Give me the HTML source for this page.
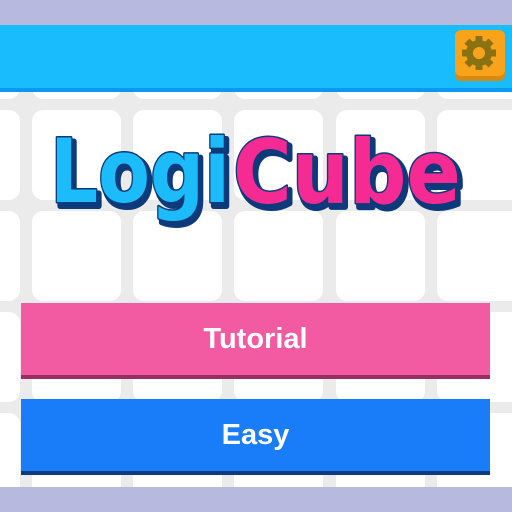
<!DOCTYPE html>
<html><head><meta charset="utf-8"><style>
html,body{margin:0;padding:0}
body{width:512px;height:512px;position:relative;overflow:hidden;background:#ebebeb;font-family:"DejaVu Sans","Liberation Sans",sans-serif}
.tile{position:absolute;width:89px;height:90px;background:#fff;border-radius:11px}
.top{position:absolute;left:0;top:0;width:512px;height:25px;background:#b7b9df}
.bar{position:absolute;left:0;top:25px;width:512px;height:63px;background:#19bcfd;border-bottom:4px solid #0a98f5}
.gear{position:absolute;left:455px;top:30px;width:50px;height:46px;background:#f9a31b;border-radius:6px;box-shadow:0 5px 0 #d98a12}
.btn{position:absolute;left:21px;width:469px;height:72px;color:#fff;font-family:"Liberation Sans",sans-serif;font-weight:bold;font-size:29px;text-align:center;line-height:72px}
.bot{position:absolute;left:0;top:487px;width:512px;height:25px;background:#b7b9df}
</style></head><body>
<div id="g"></div>
<script>
var g=document.getElementById('g'),h='';
var xs=[-69,32,133,234,336,437],ys=[9,110,211,312,413];
for(var i=0;i<xs.length;i++)for(var j=0;j<ys.length;j++)h+='<div class="tile" style="left:'+xs[i]+'px;top:'+ys[j]+'px"></div>';
g.innerHTML=h;
</script>
<div class="top"></div>
<div class="bar"></div>
<div class="gear"><svg width="50" height="46" viewBox="0 0 50 46">
<g fill="#8a7213" transform="translate(24,23)">
<circle r="13"/>
<g><rect x="-3.5" y="-17" width="7" height="6"/><rect x="-3.5" y="11" width="7" height="6"/><rect x="-17" y="-3.5" width="6" height="7"/><rect x="11" y="-3.5" width="6" height="7"/></g>
<g transform="rotate(45)"><rect x="-3.5" y="-17" width="7" height="6"/><rect x="-3.5" y="11" width="7" height="6"/><rect x="-17" y="-3.5" width="6" height="7"/><rect x="11" y="-3.5" width="6" height="7"/></g>
</g><circle cx="24" cy="23" r="6" fill="#f9a31b"/></svg></div>
<svg style="position:absolute;left:0;top:0" width="512" height="512">
<g font-family="DejaVu Sans, sans-serif" font-weight="bold" font-size="88" stroke="#0d3a7a" stroke-width="6" paint-order="stroke" stroke-linejoin="round">
<text x="53" y="206" fill="#0d3a7a" textLength="180" lengthAdjust="spacingAndGlyphs">Logi</text>
<text x="50" y="202" fill="#1bbcf9" stroke-width="3" textLength="180" lengthAdjust="spacingAndGlyphs">Logi</text>
<text x="236" y="207" fill="#0d3a7a" textLength="228" lengthAdjust="spacingAndGlyphs">Cube</text>
<text x="233" y="203" fill="#f52a93" stroke-width="3" textLength="228" lengthAdjust="spacingAndGlyphs">Cube</text>
</g></svg>
<div class="btn" style="top:303px;background:#f25aa1;border-bottom:4px solid #9a2e60">Tutorial</div>
<div class="btn" style="top:399px;background:#197cf8;border-bottom:4px solid #0c3b80">Easy</div>
<div class="bot"></div>
</body></html>
